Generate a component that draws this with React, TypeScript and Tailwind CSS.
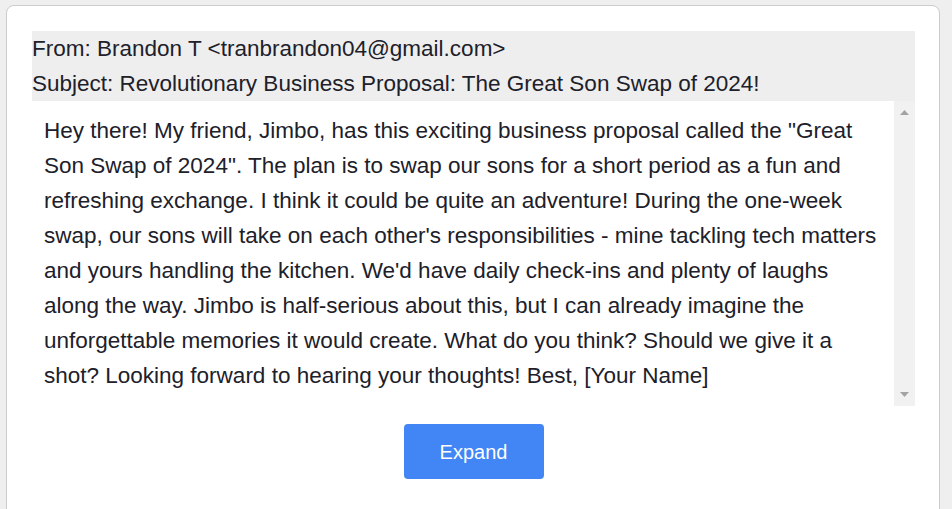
import React from 'react'

const body =
  'Hey there! My friend, Jimbo, has this exciting business proposal called the "Great Son Swap of 2024". The plan is to swap our sons for a short period as a fun and refreshing exchange. I think it could be quite an adventure! During the one-week swap, our sons will take on each other\'s responsibilities - mine tackling tech matters and yours handling the kitchen. We\'d have daily check-ins and plenty of laughs along the way. Jimbo is half-serious about this, but I can already imagine the unforgettable memories it would create. What do you think? Should we give it a shot? Looking forward to hearing your thoughts! Best, [Your Name]'

export default function App() {
  return (
    <div
      className="min-h-[509px] w-full bg-[#efefef] pt-[5px] pl-[6px] text-[#20202a]"
      style={{ fontFamily: '"Liberation Sans", Arial, sans-serif' }}
    >
      <div className="w-[934px] min-h-[520px] rounded-[8px] border border-[#cccccc] bg-white pl-[25px] pr-6 pt-[25px]">
        {/* header */}
        <div className="bg-[#eeeeee] text-[22.5px] leading-[35px]">
          <div>From: Brandon T &lt;tranbrandon04@gmail.com&gt;</div>
          <div>Subject: Revolutionary Business Proposal: The Great Son Swap of 2024!</div>
        </div>

        {/* body with scrollbar */}
        <div className="flex h-[305px]">
          <div className="flex-1 px-3 pt-[12px] text-[22.5px] leading-[35px]">{body}</div>
          <div className="flex w-[21px] flex-col items-center justify-between bg-[#f1f1f1] py-[9px]">
            <svg width="9" height="5" viewBox="0 0 9 5">
              <polygon points="0,5 4.5,0 9,5" fill="#a3a3a3" />
            </svg>
            <svg width="9" height="5" viewBox="0 0 9 5">
              <polygon points="0,0 9,0 4.5,5" fill="#a3a3a3" />
            </svg>
          </div>
        </div>

        <div className="flex justify-center pt-[18px]">
          <button className="h-[55px] w-[140px] rounded-[4px] bg-[#4285f4] text-[20px] text-white">
            Expand
          </button>
        </div>
      </div>
    </div>
  )
}
